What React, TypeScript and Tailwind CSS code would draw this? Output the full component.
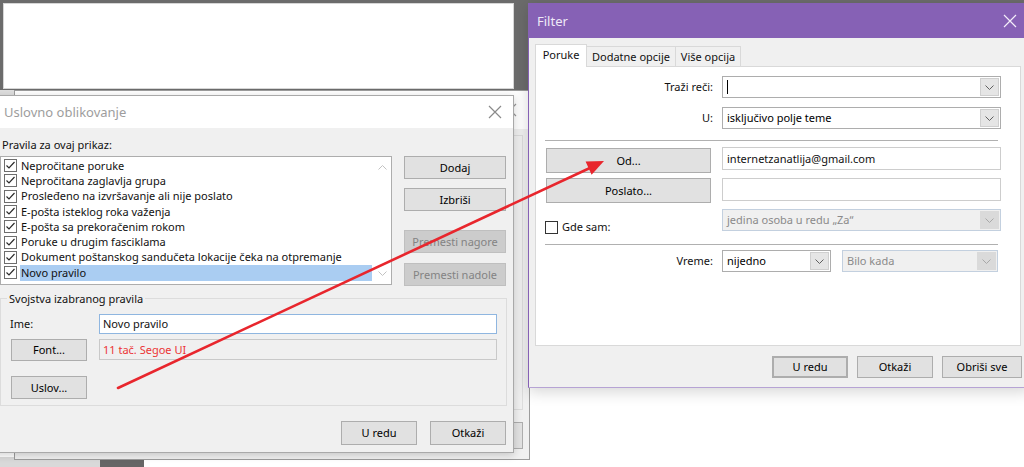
import React from 'react';

const FONT = "font-['Noto_Sans','Open_Sans',sans-serif]";

const rules = [
  'Nepročitane poruke',
  'Nepročitana zaglavlja grupa',
  'Prosleđeno na izvršavanje ali nije poslato',
  'E-pošta isteklog roka važenja',
  'E-pošta sa prekoračenim rokom',
  'Poruke u drugim fasciklama',
  'Dokument poštanskog sandučeta lokacije čeka na otpremanje',
  'Novo pravilo',
];

function Chevron({ up = false, className = 'stroke-[#606060]' }: { up?: boolean; className?: string }) {
  return (
    <svg width="9" height="5" viewBox="0 0 9 5" className={className}>
      <path d={up ? 'M0.5 4.5 L4.5 0.5 L8.5 4.5' : 'M0.5 0.5 L4.5 4.5 L8.5 0.5'} fill="none" strokeWidth="1" />
    </svg>
  );
}

function CloseX({ className }: { className: string }) {
  return (
    <svg width="14" height="14" viewBox="0 0 14 14" className={className}>
      <path d="M1 1 L13 13 M13 1 L1 13" fill="none" strokeWidth="1.2" />
    </svg>
  );
}

function ListCheck() {
  return (
    <svg width="13" height="13" viewBox="0 0 13 13" className="shrink-0">
      <rect x="0.5" y="0.5" width="12" height="12" fill="white" stroke="#6e6e6e" />
      <path d="M2.5 6.5 L5 9 L10.5 3" fill="none" stroke="#2b2b2b" strokeWidth="1.2" />
    </svg>
  );
}

function Btn({ children, className = '', disabled = false }: { children: React.ReactNode; className?: string; disabled?: boolean }) {
  return (
    <div
      className={`flex items-center justify-center border shrink-0 ${
        disabled ? 'bg-[#cccccc] border-[#bfbfbf] text-[#838383]' : 'bg-[#e1e1e1] border-[#adadad] text-black'
      } ${className}`}
    >
      {children}
    </div>
  );
}

function Combo({ text, className = '', disabled = false }: { text?: string; className?: string; disabled?: boolean }) {
  return (
    <div
      className={`flex h-[22px] border shrink-0 ${
        disabled ? 'border-[#c3d0df] bg-[#f0f0f0] text-[#8a8a8a]' : 'border-[#adadad] bg-white text-black'
      } ${className}`}
    >
      <div className="flex-1 flex items-center pl-[4px] whitespace-nowrap overflow-hidden">
        {text ?? <span className="w-px h-[14px] bg-black" />}
      </div>
      <div
        className={`w-[19px] m-px flex items-center justify-center border ${
          disabled ? 'bg-[#dadada] border-[#dadada]' : 'bg-[#e5e5e5] border-[#cfcfcf]'
        }`}
      >
        <Chevron className={disabled ? 'stroke-[#a8a8a8]' : 'stroke-[#606060]'} />
      </div>
    </div>
  );
}

function Arrow() {
  return (
    <svg className="absolute left-0 top-0 pointer-events-none" width="1024" height="467" viewBox="0 0 1024 467">
      <line x1="118" y1="388" x2="592" y2="167" stroke="#e8262d" strokeWidth="2.6" strokeLinecap="round" />
      <polygon points="604,161 591.6,174.8 585.6,161.6" fill="#e8262d" />
    </svg>
  );
}

export default function App() {
  return (
    <div className={`relative w-[1024px] h-[467px] overflow-hidden bg-white text-[11px] leading-[16px] text-[#111] ${FONT}`}>
      {/* desktop behind the dialogs */}
      <div className="absolute left-0 top-0 w-[1024px] h-[3px] bg-[#6b6b6b]" />
      <div className="absolute left-0 top-0 w-[530px] h-[95px] bg-[#6b6b6b]">
        <div className="absolute left-[3px] top-[3px] w-[511px] h-[86px] bg-white border border-[#d6d6d6]" />
        <div className="absolute left-0 top-[90px] w-[98px] h-[5px] bg-[#dedede]" />
        <div className="absolute left-[190px] top-[90px] w-[340px] h-[5px] bg-[#dedede]" />
      </div>
      <div className="absolute left-0 top-[457px] w-[100px] h-[10px] bg-[#d9d9d9]" />
      <div className="absolute left-[100px] top-[457px] w-[44px] h-[10px] bg-[#666666]" />

      {/* window lying behind "Uslovno oblikovanje" */}
      <div className="absolute left-[14px] top-[90px] w-[516px] h-[370px] border border-[#9c9c9c] bg-[#f0f0f0] flex flex-col">
        <div className="h-[38px] bg-white flex items-center justify-end pr-[12px]">
          <CloseX className="stroke-[#9a9a9a]" />
        </div>
        <div className="flex-1 flex flex-col items-end pr-[6px] pt-[6px]">
          <div className="w-[300px] h-[275px] border border-[#dcdcdc]" />
          <Btn className="w-[76px] h-[27px] mt-[12px]">{''}</Btn>
        </div>
      </div>

      {/* Uslovno oblikovanje */}
      <div className="absolute left-[-10px] top-[95px] w-[524px] h-[358px] border border-[#a9a9a9] bg-[#f0f0f0] flex flex-col shadow-[0_2px_8px_rgba(0,0,0,0.18)]">
        <div className="h-[32px] bg-white flex items-center justify-between pl-[13px] pr-[11px]">
          <span className="text-[13px] text-[#9d9d9d]">Uslovno oblikovanje</span>
          <CloseX className="stroke-[#8a8a8a]" />
        </div>
        <div className="flex-1 flex flex-col pl-[9px] pr-[7px] pt-[9px]">
          <div className="pl-[2px]">Pravila za ovaj prikaz:</div>
          <div className="flex gap-[12px] mt-[3px]">
            <div className="w-[392px] h-[129px] border border-[#adadad] bg-white flex">
              <div className="flex-1 flex flex-col pt-[1px]">
                {rules.map((r, i) => (
                  <div key={r} className="flex items-center h-[15.3px]">
                    <div className="ml-[3px]">
                      <ListCheck />
                    </div>
                    <span
                      className={`ml-[3px] w-[352px] h-[16px] pl-[1px] flex items-center whitespace-nowrap ${
                        i === rules.length - 1 ? 'bg-[#aacdf2]' : ''
                      }`}
                    >
                      {r}
                    </span>
                  </div>
                ))}
              </div>
              <div className="w-[17px] flex flex-col items-center justify-between pt-[8px] pb-[8px]">
                <Chevron up className="stroke-[#c2c2c2]" />
                <Chevron className="stroke-[#c2c2c2]" />
              </div>
            </div>
            <div className="flex flex-col w-[102px]">
              <Btn className="h-[23px]">Dodaj</Btn>
              <Btn className="h-[23px] mt-[9px]">Izbriši</Btn>
              <Btn disabled className="h-[23px] mt-[19px]">Premesti nagore</Btn>
              <Btn disabled className="h-[23px] mt-[10px]">Premesti nadole</Btn>
            </div>
          </div>

          <div className="relative mt-[12px] w-[507px] h-[108px] border border-[#dcdcdc] pl-[9px] pt-[15px]">
            <span className="absolute left-[6px] top-[-8px] bg-[#f0f0f0] px-[2px]">Svojstva izabranog pravila</span>
            <div className="flex items-center h-[20px]">
              <span className="w-[89px]">Ime:</span>
              <div className="w-[398px] h-[20px] border border-[#8fb6e0] bg-white flex items-center pl-[3px]">Novo pravilo</div>
            </div>
            <div className="flex items-start mt-[5px]">
              <Btn className="ml-[1px] w-[76px] h-[22px]">Font...</Btn>
              <div className="ml-[12px] w-[398px] h-[21px] border border-[#c9c9c9] bg-[#f0f0f0] flex items-center pl-[3px] text-[#ec3535]">
                11 tač. Segoe UI
              </div>
            </div>
            <Btn className="ml-[1px] mt-[15px] w-[76px] h-[23px]">Uslov...</Btn>
          </div>

          <div className="flex justify-end gap-[13px] mt-[15px]">
            <Btn className="w-[76px] h-[24px]">U redu</Btn>
            <Btn className="w-[76px] h-[24px]">Otkaži</Btn>
          </div>
        </div>
      </div>

      {/* Filter */}
      <div className="absolute left-[528px] top-[3px] w-[502px] h-[385px] border-l border-b border-l-[#8661b5] border-b-[#b6a3d4] bg-[#f0f0f0] flex flex-col shadow-[0_4px_14px_rgba(0,0,0,0.16)]">
        <div className="h-[35px] bg-[#8661b5] flex items-center justify-between pl-[8px] pr-[13px]">
          <span className="text-[13px] text-[#efe9f7]">Filter</span>
          <CloseX className="stroke-[#f3eef9]" />
        </div>
        <div className="flex-1 flex flex-col pl-[6px] pt-[6px]">
          <div className="flex items-end h-[22px]">
            <div className="relative z-10 h-[23px] mb-[-1px] w-[52px] bg-white border border-b-0 border-[#d9d9d9] flex items-center justify-center pb-[3px]">
              Poruke
            </div>
            <div className="h-[20px] w-[90px] -ml-px border border-b-0 border-[#d9d9d9] flex items-center justify-center">
              Dodatne opcije
            </div>
            <div className="h-[20px] w-[66px] -ml-px border border-b-0 border-[#d9d9d9] flex items-center justify-center">
              Više opcija
            </div>
          </div>
          <div className="w-[486px] h-[280px] border border-[#d9d9d9] bg-white flex flex-col pl-[9px] pt-[9px]">
            <div className="flex items-center h-[22px]">
              <span className="w-[168px] text-right">Traži reči:</span>
              <Combo className="ml-[9px] w-[279px]" />
            </div>
            <div className="flex items-center h-[22px] mt-[9px]">
              <span className="w-[168px] text-right">U:</span>
              <Combo text="isključivo polje teme" className="ml-[9px] w-[279px]" />
            </div>
            <div className="mt-[11px] w-[453px] h-px bg-[#b0b0b0]" />
            <div className="flex items-start h-[26px] mt-[6px]">
              <Btn className="ml-[1px] mt-[1px] w-[165px] h-[25px]">Od...</Btn>
              <div className="ml-[11px] w-[279px] h-[23px] border border-[#cdcdcd] bg-white flex items-center pl-[4px]">
                internetzanatlija@gmail.com
              </div>
            </div>
            <div className="flex items-start h-[25px] mt-[5px]">
              <Btn className="ml-[1px] w-[165px] h-[25px]">Poslato...</Btn>
              <div className="ml-[11px] w-[279px] h-[23px] border border-[#cdcdcd] bg-white" />
            </div>
            <div className="flex items-start h-[24px] mt-[6px]">
              <div className="w-[168px] mt-[10px] flex items-center gap-[4px]">
                <div className="w-[13px] h-[13px] border border-[#333333] bg-white" />
                <span>Gde sam:</span>
              </div>
              <Combo disabled text="jedina osoba u redu „Za“" className="ml-[9px] w-[279px]" />
            </div>
            <div className="mt-[11px] w-[453px] h-px bg-[#b0b0b0]" />
            <div className="flex items-center h-[22px] mt-[5px]">
              <span className="w-[168px] text-right">Vreme:</span>
              <Combo text="nijedno" className="ml-[9px] w-[109px]" />
              <Combo disabled text="Bilo kada" className="ml-[11px] w-[156px]" />
            </div>
          </div>
          <div className="flex justify-end gap-[9px] mt-[10px] pr-[8px]">
            <Btn className="w-[76px] h-[22px] border-2 border-[#0078d7]">U redu</Btn>
            <Btn className="w-[76px] h-[22px]">Otkaži</Btn>
            <Btn className="w-[80px] h-[22px]">Obriši sve</Btn>
          </div>
        </div>
      </div>

      <Arrow />
    </div>
  );
}
